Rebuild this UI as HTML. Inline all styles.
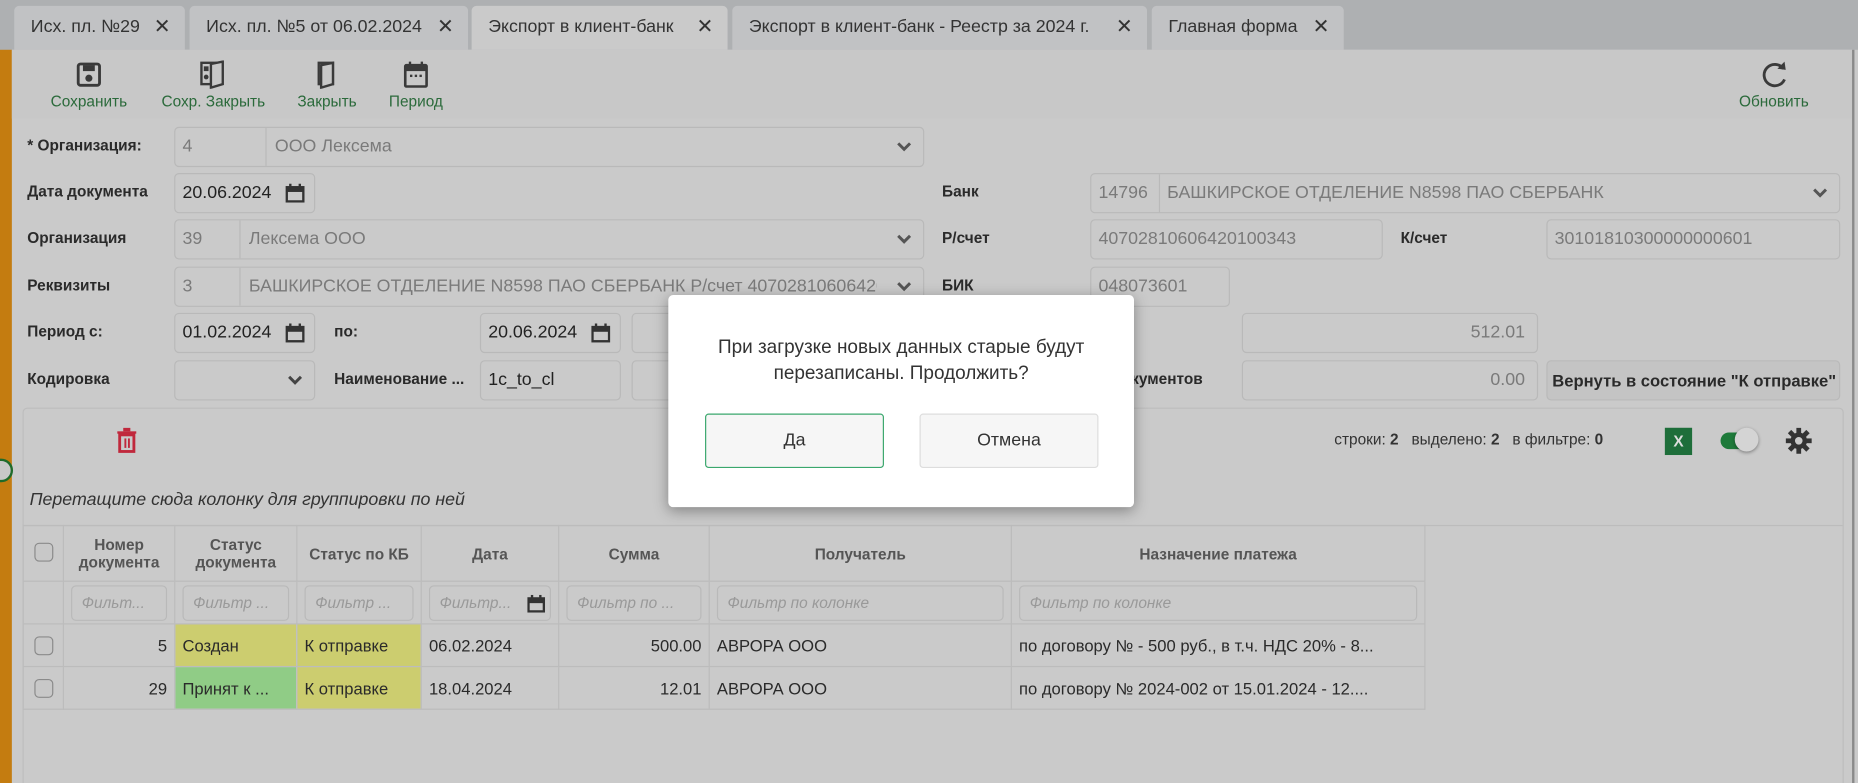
<!DOCTYPE html>
<html><head><meta charset="utf-8"><style>
*{box-sizing:border-box;margin:0;padding:0}
html,body{width:1858px;height:783px;overflow:hidden;background:#cacaca}
#w{position:absolute;left:0;top:0;width:1568px;height:661px;transform:scale(1.18495);transform-origin:0 0;background:#cacaca;font-family:"Liberation Sans","DejaVu Sans",sans-serif;color:#2a2a2a;overflow:hidden}
.a{position:absolute}
.tabbar{left:0;top:0;width:1568px;height:42px;background:#aeb0b2}
.tab{position:absolute;top:5px;height:37px;background:#c1c2c4;border-radius:4px 4px 0 0;font-size:15px;color:#333;line-height:36px;padding-left:14px;white-space:nowrap}
.tab.act{background:#cacaca}
.tab b{position:absolute;right:12px;top:0;font-size:17px;font-weight:bold;color:#333}
.tb{top:42px;height:58px;width:1568px;left:0;background:#c8c8c8}
.tl{position:absolute;top:78px;font-size:13px;color:#2b6a3b;transform:translateX(-50%);white-space:nowrap}
.lbl{position:absolute;font-size:13px;font-weight:bold;color:#2a2a2a;white-space:nowrap}
.in{position:absolute;height:34px;border:1px solid #b9b9b9;border-radius:4px;background:#cacaca;font-size:15px;color:#7a7a7a;line-height:32px;padding-left:6px;white-space:nowrap;overflow:hidden}
.in.d{color:#222}
.sep{position:absolute;top:0;bottom:0;width:1px;background:#b9b9b9}
.chev{position:absolute;right:10px;top:11px}
.cal{position:absolute;right:8px;top:8px}
.grid{left:19px;top:344px;width:1537px;height:330px;border:1px solid #bdbdbd;border-radius:4px}
table{position:absolute;left:19px;top:443px;border-collapse:collapse;font-size:14px}
td,th{border:1px solid #bcbcbc;height:36px;padding:0 6px;white-space:nowrap;overflow:hidden}
th{font-weight:bold;color:#555;font-size:13px;height:47px}
.f{height:30px;border:1px solid #b9b9b9;border-radius:4px;font-style:italic;color:#999;font-size:13px;line-height:28px;padding-left:8px;text-align:left;overflow:hidden;position:relative}
.cb{width:16px;height:16px;border:1px solid #8a8a8a;border-radius:4px;margin:auto;background:#c8c8c8}
.y{background:#cccd6f}.g{background:#90cc86}
.dlg{left:564px;top:249px;width:393px;height:179px;background:#fff;border-radius:4px;box-shadow:0 3px 12px rgba(0,0,0,.35)}
.btn{position:absolute;top:100px;width:151px;height:46px;border-radius:3px;font-size:15px;text-align:center;line-height:44px;color:#333;background:#f6f6f6}
</style></head><body><div id="w">
<div class="a" style="left:0;top:0;width:10px;height:661px;background:#c47c10"></div>
<div class="a" style="left:-9px;top:387px;width:20px;height:20px;border-radius:50%;border:2px solid #1f6b2a;background:#c8c8c8"></div>
<div class="a tabbar"></div>
<div class="tab" style="left:12px;width:144px">Исх. пл. №29<b>✕</b></div>
<div class="tab" style="left:160px;width:235px">Исх. пл. №5 от 06.02.2024<b>✕</b></div>
<div class="tab act" style="left:398px;width:216px">Экспорт в клиент-банк<b>✕</b></div>
<div class="tab" style="left:618px;width:350px">Экспорт в клиент-банк - Реестр за 2024 г.<b>✕</b></div>
<div class="tab" style="left:972px;width:162px">Главная форма<b>✕</b></div>
<div class="a tb" style="left:10px;width:1553px"></div>
<svg class="a" style="left:64px;top:52px" width="22" height="22" viewBox="0 0 22 22"><rect x="2" y="2" width="18" height="18" rx="2" fill="none" stroke="#3a3a3a" stroke-width="2.4"/><rect x="6" y="3" width="10" height="5" fill="#3a3a3a"/><circle cx="11" cy="14" r="3" fill="#3a3a3a"/></svg>
<svg class="a" style="left:168px;top:51px" width="24" height="24" viewBox="0 0 24 24"><rect x="2" y="2" width="15" height="18" fill="none" stroke="#3a3a3a" stroke-width="2"/><path d="M10 3 L20 1 V20 L10 23 Z" fill="#c8c8c8" stroke="#3a3a3a" stroke-width="2"/><rect x="4" y="5" width="4" height="4" fill="#3a3a3a"/><circle cx="6" cy="14" r="2" fill="#3a3a3a"/></svg>
<svg class="a" style="left:266px;top:51px" width="20" height="24" viewBox="0 0 20 24"><rect x="3" y="2" width="12" height="18" fill="none" stroke="#3a3a3a" stroke-width="2"/><path d="M5 4 L15 2 V20 L5 23 Z" fill="#c8c8c8" stroke="#3a3a3a" stroke-width="2"/></svg>
<svg class="a" style="left:340px;top:51px" width="22" height="24" viewBox="0 0 22 24"><rect x="2" y="4" width="18" height="18" rx="1" fill="none" stroke="#3a3a3a" stroke-width="2.2"/><rect x="2" y="4" width="18" height="5" fill="#3a3a3a"/><rect x="5" y="1" width="2" height="5" fill="#3a3a3a"/><rect x="15" y="1" width="2" height="5" fill="#3a3a3a"/><rect x="6" y="12" width="2" height="2" fill="#3a3a3a"/><rect x="10" y="12" width="2" height="2" fill="#3a3a3a"/><rect x="14" y="12" width="2" height="2" fill="#3a3a3a"/></svg>
<svg class="a" style="left:1485px;top:50px" width="26" height="26" viewBox="0 0 26 26"><path d="M20 8 A9 9 0 1 0 21 17" fill="none" stroke="#3a3a3a" stroke-width="2.4"/><path d="M15 8 L22 9 L21 2 Z" fill="#3a3a3a"/></svg>
<div class="tl" style="left:75px">Сохранить</div><div class="tl" style="left:180px">Сохр. Закрыть</div><div class="tl" style="left:276px">Закрыть</div><div class="tl" style="left:351px">Период</div><div class="tl" style="left:1497px">Обновить</div>
<div class="a" style="left:1563px;top:42px;width:2px;height:619px;background:#8a8a8a"></div>

<div class="lbl" style="left:23px;top:115px">* Организация:</div>
<div class="in" style="left:147px;top:107px;width:633px">4<div class="sep" style="left:76px"></div><span style="position:absolute;left:84px">ООО Лексема</span><svg class="chev" width="12" height="10"><path d="M1 2 L6 7 L11 2" fill="none" stroke="#555" stroke-width="2.5"/></svg></div>
<div class="lbl" style="left:23px;top:154px">Дата документа</div>
<div class="in d" style="left:147px;top:146px;width:119px">20.06.2024<svg class="cal" width="16" height="16"><rect x="1" y="3" width="14" height="12" fill="none" stroke="#333" stroke-width="2"/><rect x="1" y="3" width="14" height="4" fill="#333"/><rect x="3" y="0" width="2" height="4" fill="#333"/><rect x="11" y="0" width="2" height="4" fill="#333"/></svg></div>
<div class="lbl" style="left:795px;top:154px">Банк</div>
<div class="in" style="left:920px;top:146px;width:633px">14796<div class="sep" style="left:57px"></div><span style="position:absolute;left:64px">БАШКИРСКОЕ ОТДЕЛЕНИЕ N8598 ПАО СБЕРБАНК</span><svg class="chev" width="12" height="10"><path d="M1 2 L6 7 L11 2" fill="none" stroke="#555" stroke-width="2.5"/></svg></div>
<div class="lbl" style="left:23px;top:193px">Организация</div>
<div class="in" style="left:147px;top:185px;width:633px">39<div class="sep" style="left:54px"></div><span style="position:absolute;left:62px">Лексема ООО</span><svg class="chev" width="12" height="10"><path d="M1 2 L6 7 L11 2" fill="none" stroke="#555" stroke-width="2.5"/></svg></div>
<div class="lbl" style="left:795px;top:193px">Р/счет</div>
<div class="in" style="left:920px;top:185px;width:247px">40702810606420100343</div>
<div class="lbl" style="left:1182px;top:193px">К/счет</div>
<div class="in" style="left:1305px;top:185px;width:248px">30101810300000000601</div>
<div class="lbl" style="left:23px;top:233px">Реквизиты</div>
<div class="in" style="left:147px;top:225px;width:633px">3<div class="sep" style="left:54px"></div><span style="position:absolute;left:62px;width:530px;overflow:hidden">БАШКИРСКОЕ ОТДЕЛЕНИЕ N8598 ПАО СБЕРБАНК Р/счет 40702810606420100343</span><svg class="chev" width="12" height="10"><path d="M1 2 L6 7 L11 2" fill="none" stroke="#555" stroke-width="2.5"/></svg></div>
<div class="lbl" style="left:795px;top:233px">БИК</div>
<div class="in" style="left:920px;top:225px;width:118px">048073601</div>
<div class="lbl" style="left:23px;top:272px">Период с:</div>
<div class="in d" style="left:147px;top:264px;width:119px">01.02.2024<svg class="cal" width="16" height="16"><rect x="1" y="3" width="14" height="12" fill="none" stroke="#333" stroke-width="2"/><rect x="1" y="3" width="14" height="4" fill="#333"/><rect x="3" y="0" width="2" height="4" fill="#333"/><rect x="11" y="0" width="2" height="4" fill="#333"/></svg></div>
<div class="lbl" style="left:282px;top:272px">по:</div>
<div class="in d" style="left:405px;top:264px;width:119px">20.06.2024<svg class="cal" width="16" height="16"><rect x="1" y="3" width="14" height="12" fill="none" stroke="#333" stroke-width="2"/><rect x="1" y="3" width="14" height="4" fill="#333"/><rect x="3" y="0" width="2" height="4" fill="#333"/><rect x="11" y="0" width="2" height="4" fill="#333"/></svg></div>
<div class="in" style="left:533px;top:264px;width:60px"></div>
<div class="in" style="left:1048px;top:264px;width:250px;text-align:right;padding-right:10px">512.01</div>
<div class="lbl" style="left:23px;top:312px">Кодировка</div>
<div class="in" style="left:147px;top:304px;width:119px"><svg class="chev" width="12" height="10"><path d="M1 2 L6 7 L11 2" fill="none" stroke="#444" stroke-width="2.5"/></svg></div>
<div class="lbl" style="left:282px;top:312px">Наименование ...</div>
<div class="in d" style="left:405px;top:304px;width:119px">1c_to_cl</div>
<div class="in" style="left:533px;top:304px;width:60px"></div>
<div class="lbl" style="right:553px;top:312px">Количество документов</div>
<div class="in" style="left:1048px;top:304px;width:250px;text-align:right;padding-right:10px">0.00</div>
<div class="in d" style="left:1305px;top:304px;width:248px;background:#c4c4c4;font-size:14px;font-weight:bold;color:#2a2a2a;padding-left:4px">Вернуть в состояние "К отправке"</div>

<div class="a grid"></div>
<svg class="a" style="left:98px;top:361px" width="18" height="22" viewBox="0 0 18 22"><rect x="1" y="3" width="16" height="2" fill="#c0283c"/><rect x="6" y="0" width="6" height="3" fill="#c0283c"/><rect x="3" y="6" width="12" height="14" fill="none" stroke="#c0283c" stroke-width="2.4"/><rect x="7" y="9" width="1.6" height="8" fill="#c0283c"/><rect x="10" y="9" width="1.6" height="8" fill="#c0283c"/></svg>
<div class="a" style="left:1126px;top:363px;font-size:13px;color:#333;white-space:nowrap">строки: <b>2</b>&nbsp;&nbsp; выделено: <b>2</b>&nbsp;&nbsp; в фильтре: <b>0</b></div>
<div class="a" style="left:1405px;top:361px;width:23px;height:23px;background:#1e6e3a;color:#ddd;font-size:13px;font-weight:bold;text-align:center;line-height:23px">X</div>
<div class="a" style="left:1452px;top:365px;width:30px;height:14px;border-radius:7px;background:#1e7a3a"></div>
<div class="a" style="left:1464px;top:361px;width:20px;height:20px;border-radius:50%;background:#d4d4d4;box-shadow:0 1px 3px rgba(0,0,0,.4)"></div>
<svg class="a" style="left:1507px;top:361px" width="22" height="22" viewBox="0 0 22 22"><g fill="#333"><circle cx="11" cy="11" r="7"/><rect x="9" y="0" width="4" height="22"/><rect x="0" y="9" width="22" height="4"/><rect x="9" y="0" width="4" height="22" transform="rotate(45 11 11)"/><rect x="9" y="0" width="4" height="22" transform="rotate(-45 11 11)"/></g><circle cx="11" cy="11" r="3.2" fill="#cacaca"/></svg>
<div class="a" style="left:25px;top:413px;font-size:15px;font-style:italic;color:#333">Перетащите сюда колонку для группировки по ней</div>
<div class="a" style="left:20px;top:443px;width:1535px;height:1px;background:#bcbcbc"></div>
<table>
<tr><th style="width:34px;vertical-align:top;padding-top:14px"><div class="cb"></div></th><th style="width:94px">Номер<br>документа</th><th style="width:103px">Статус<br>документа</th><th style="width:105px">Статус по КБ</th><th style="width:116px">Дата</th><th style="width:127px">Сумма</th><th style="width:255px">Получатель</th><th style="width:349px">Назначение платежа</th></tr>
<tr><td style="height:36px"></td><td><div class="f">Фильт...</div></td><td><div class="f">Фильтр ...</div></td><td><div class="f">Фильтр ...</div></td><td><div class="f">Фильтр...<svg style="position:absolute;right:4px;top:7px" width="15" height="15"><rect x="1" y="3" width="13" height="11" fill="none" stroke="#333" stroke-width="2"/><rect x="1" y="3" width="13" height="4" fill="#333"/><rect x="3" y="0" width="2" height="4" fill="#333"/><rect x="10" y="0" width="2" height="4" fill="#333"/></svg></div></td><td><div class="f">Фильтр по ...</div></td><td><div class="f">Фильтр по колонке</div></td><td><div class="f">Фильтр по колонке</div></td></tr>
<tr><td><div class="cb"></div></td><td style="text-align:right">5</td><td class="y">Создан</td><td class="y">К отправке</td><td>06.02.2024</td><td style="text-align:right">500.00</td><td>АВРОРА ООО</td><td>по договору № - 500 руб., в т.ч. НДС 20% - 8...</td></tr>
<tr><td style="height:34px"><div class="cb"></div></td><td style="text-align:right">29</td><td class="g">Принят к ...</td><td class="y">К отправке</td><td>18.04.2024</td><td style="text-align:right">12.01</td><td>АВРОРА ООО</td><td>по договору № 2024-002 от 15.01.2024 - 12....</td></tr>
</table>

<div class="a dlg">
<div style="position:absolute;left:0;top:34px;width:393px;text-align:center;font-size:16px;line-height:22px;color:#333">При загрузке новых данных старые будут<br>перезаписаны. Продолжить?</div>
<div class="btn" style="left:31px;border:1px solid #3aa76d">Да</div>
<div class="btn" style="left:212px;border:1px solid #ddd">Отмена</div>
</div>
</div></body></html>
